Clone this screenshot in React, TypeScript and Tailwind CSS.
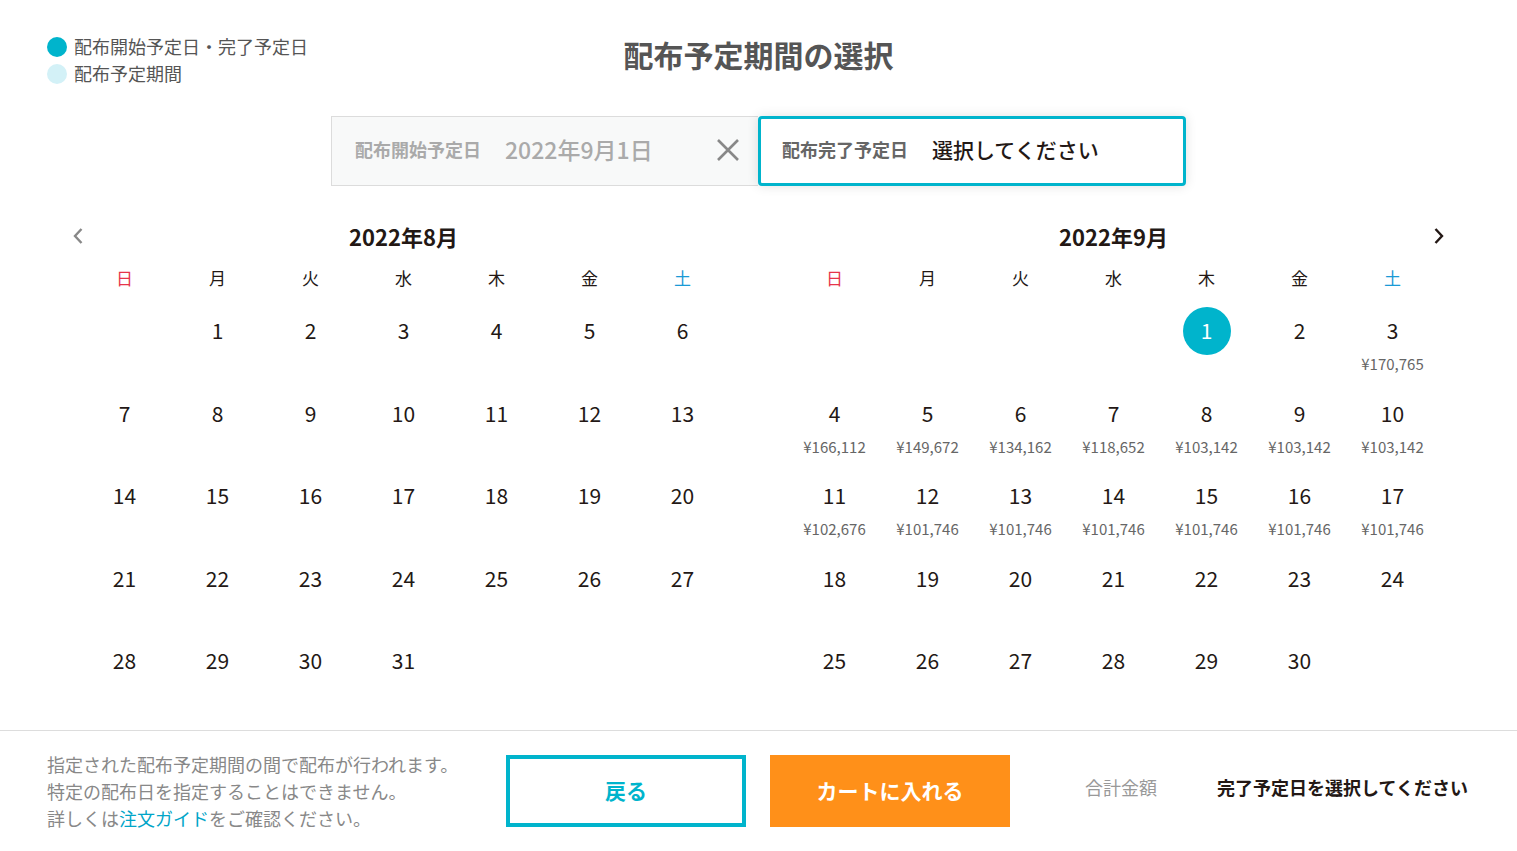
import React from "react";

const CYAN = "#00b4cc";

type Day = { d: number; price?: string; selected?: boolean } | null;

const WEEK = ["日", "月", "火", "水", "木", "金", "土"];

function range(a: number, b: number): Day[] {
  const out: Day[] = [];
  for (let i = a; i <= b; i++) out.push({ d: i });
  return out;
}

const august: Day[] = [null, ...range(1, 31)];

const sepPrices: Record<number, string> = {
  3: "¥170,765",
  4: "¥166,112",
  5: "¥149,672",
  6: "¥134,162",
  7: "¥118,652",
  8: "¥103,142",
  9: "¥103,142",
  10: "¥103,142",
  11: "¥102,676",
  12: "¥101,746",
  13: "¥101,746",
  14: "¥101,746",
  15: "¥101,746",
  16: "¥101,746",
  17: "¥101,746",
};

const september: Day[] = [
  null,
  null,
  null,
  null,
  ...range(1, 30).map((x) => (x ? { ...x, price: sepPrices[x.d], selected: x.d === 1 } : x)),
];

function ChevronLeft() {
  return (
    <svg width="12" height="18" viewBox="0 0 12 18" fill="none" stroke="#888" strokeWidth="2.4">
      <path d="M9.5 2L3 9l6.5 7" />
    </svg>
  );
}

function ChevronRight() {
  return (
    <svg width="12" height="18" viewBox="0 0 12 18" fill="none" stroke="#231815" strokeWidth="2.4">
      <path d="M2.5 2L9 9l-6.5 7" />
    </svg>
  );
}

function CloseIcon() {
  return (
    <svg width="24" height="24" viewBox="0 0 24 24" fill="none" stroke="#888" strokeWidth="2.6">
      <path d="M2 2l20 20M22 2L2 22" />
    </svg>
  );
}

function Calendar({ title, days, side }: { title: string; days: Day[]; side: "left" | "right" }) {
  return (
    <div className="w-[651px]">
      <div className="flex h-[44px] items-center">
        <div className="flex w-[24px] justify-start">
          {side === "left" && (
            <button className="-ml-[6px]">
              <ChevronLeft />
            </button>
          )}
        </div>
        <div className="flex-1 text-center text-[22px] font-bold text-[#231815]">{title}</div>
        <div className="flex w-[24px] justify-end">
          {side === "right" && (
            <button className="-mr-[6px]">
              <ChevronRight />
            </button>
          )}
        </div>
      </div>
      <div className="mt-[10px] grid grid-cols-7">
        {WEEK.map((w, i) => (
          <div
            key={w}
            className={`text-center text-[17px] leading-[20px] ${
              i === 0 ? "text-[#e6354a]" : i === 6 ? "text-[#1a9ad6]" : "text-[#231815]"
            }`}
          >
            {w}
          </div>
        ))}
      </div>
      <div className="mt-[19px] grid grid-cols-7 auto-rows-[82.5px]">
        {days.map((day, i) => (
          <div key={i} className="flex flex-col items-center">
            {day && (
              <>
                <div
                  className={`flex h-[48px] w-[48px] items-center justify-center rounded-full text-[21px] ${
                    day.selected ? "bg-[#00b4cc] text-white" : "text-[#231815]"
                  }`}
                >
                  {day.d}
                </div>
                {day.price && (
                  <div className="text-[15px] leading-[18px] text-[#666]">{day.price}</div>
                )}
              </>
            )}
          </div>
        ))}
      </div>
    </div>
  );
}

export default function App() {
  return (
    <div
      className="flex min-h-screen flex-col bg-white text-[#231815]"
      style={{ fontFamily: '"Noto Sans CJK JP", "Noto Sans", sans-serif' }}
    >
      <div className="px-[47px] pt-[33px]">
        <div className="grid grid-cols-[1fr_auto_1fr] items-start">
          <div className="flex flex-col text-[18px] leading-[27px] text-[#555]">
            <div className="flex items-center gap-[7px]">
              <span className="h-[20px] w-[20px] rounded-full bg-[#00b4cc]" />
              配布開始予定日・完了予定日
            </div>
            <div className="flex items-center gap-[7px]">
              <span className="h-[20px] w-[20px] rounded-full bg-[#d3f1f7]" />
              配布予定期間
            </div>
          </div>
          <h1 className="text-[30px] font-bold leading-[42px] text-[#555]">配布予定期間の選択</h1>
          <div />
        </div>

        <div className="mt-[29px] flex justify-center">
          <div className="flex h-[70px] w-[427px] items-center border border-r-0 border-[#dcdcdc] bg-[#f8f9f9] pb-[3px] pl-[23px] pr-[18px]">
            <span className="w-[150px] text-[18px] font-bold text-[#aaa]">配布開始予定日</span>
            <span className="flex-1 text-[23px] font-medium text-[#aaa]">2022年9月1日</span>
            <CloseIcon />
          </div>
          <div
            className="flex h-[70px] w-[428px] items-center rounded-[4px] border-[3px] bg-white pb-[3px] pl-[21px] shadow-[0_0_12px_rgba(0,0,0,0.12)]"
            style={{ borderColor: CYAN }}
          >
            <span className="w-[150px] text-[18px] font-bold text-[#666]">配布完了予定日</span>
            <span className="text-[21px] font-medium text-[#231815]">選択してください</span>
          </div>
        </div>

        <div className="mt-[28px] flex justify-center gap-[59px]">
          <Calendar title="2022年8月" days={august} side="left" />
          <Calendar title="2022年9月" days={september} side="right" />
        </div>
      </div>

      <div className="mt-[10px] flex items-center border-t border-[#dddddd] px-[47px] pb-[20px] pt-[20px]">
        <div className="w-[459px] text-[18px] leading-[27px] text-[#888]">
          <p>指定された配布予定期間の間で配布が行われます。</p>
          <p>特定の配布日を指定することはできません。</p>
          <p>
            詳しくは<a className="text-[#00a5c8]">注文ガイド</a>をご確認ください。
          </p>
        </div>
        <button
          className="h-[72px] w-[240px] border-[4px] bg-white text-[21px] font-bold"
          style={{ borderColor: CYAN, color: CYAN }}
        >
          戻る
        </button>
        <button className="ml-[24px] h-[72px] w-[240px] bg-[#ff9019] text-[21px] font-bold text-white">
          カートに入れる
        </button>
        <div className="mb-[8px] flex items-center">
          <span className="ml-[75px] text-[18px] text-[#999]">合計金額</span>
          <span className="ml-[60px] text-[18px] font-bold text-[#231815]">完了予定日を選択してください</span>
        </div>
      </div>
    </div>
  );
}
